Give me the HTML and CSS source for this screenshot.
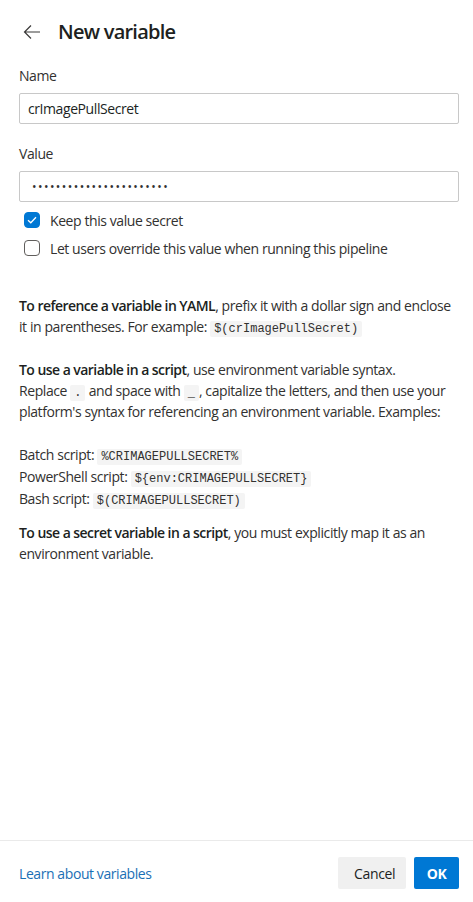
FILE: index.html
```html
<!DOCTYPE html>
<html lang="en">
<head>
<meta charset="utf-8">
<title>New variable</title>
<link rel="stylesheet" href="styles.css">
</head>
<body>
<div class="panel">
  <div class="content">
    <header class="header">
      <button class="back" aria-label="Back">
        <svg width="18" height="16" viewBox="0 0 18 16"><path d="M17 8H1.5M8 1.5L1.5 8L8 14.5" fill="none" stroke="#3b3a39" stroke-width="1.2"/></svg>
      </button>
      <h1 class="title">New variable</h1>
    </header>

    <div class="field">
      <label class="label">Name</label>
      <div class="input">crImagePullSecret</div>
    </div>

    <div class="field">
      <label class="label">Value</label>
      <div class="input secret">•••••••••••••••••••••••</div>
    </div>

    <div class="checks">
      <div class="check">
        <span class="box checked"><svg width="10" height="8" viewBox="0 0 10 8"><path d="M1 4.2L3.8 6.8L9 1.3" fill="none" stroke="#fff" stroke-width="1.3"/></svg></span>
        <span>Keep this value secret</span>
      </div>
      <div class="check">
        <span class="box"></span>
        <span>Let users override this value when running this pipeline</span>
      </div>
    </div>

    <div class="help">
      <p><b>To reference a variable in YAML</b>, prefix it with a dollar sign and enclose it in parentheses. For example: <code>$(crImagePullSecret)</code></p>
      <p><b>To use a variable in a script</b>, use environment variable syntax.<br>Replace <code>.</code> and space with <code>_</code>, capitalize the letters, and then use your platform's syntax for referencing an environment variable. Examples:</p>
      <p class="examples">Batch script: <code>%CRIMAGEPULLSECRET%</code><br>PowerShell script: <code>${env:CRIMAGEPULLSECRET}</code><br>Bash script: <code>$(CRIMAGEPULLSECRET)</code></p>
      <p><b>To use a secret variable in a script</b>, you must explicitly map it as an environment variable.</p>
    </div>
  </div>

  <footer class="footer">
    <a class="link" href="#">Learn about variables</a>
    <div class="buttons">
      <button class="btn cancel">Cancel</button>
      <button class="btn ok">OK</button>
    </div>
  </footer>
</div>
</body>
</html>
```

FILE: styles.css
```css
* { box-sizing: border-box; }
html, body { margin: 0; padding: 0; }
body {
  width: 473px;
  height: 902px;
  background: #fff;
  font-family: "Open Sans", "Noto Sans", sans-serif;
  font-size: 14px;
  letter-spacing: -0.42px;
  color: #201f1e;
}
.panel {
  height: 902px;
  display: flex;
  flex-direction: column;
}
.content {
  flex: 1;
  padding: 18px 14px 0 19px;
}
.header {
  display: flex;
  align-items: center;
  height: 28px;
  gap: 17px;
}
.back {
  border: 0;
  background: none;
  padding: 0;
  margin-left: 4px;
  width: 18px;
  height: 16px;
  display: flex;
}
.title {
  margin: 0;
  font-size: 20px;
  font-weight: 600;
  letter-spacing: -0.75px;
  line-height: 28px;
  color: #201f1e;
}
.field { margin-top: 20px; }
.label {
  display: block;
  line-height: 20px;
  margin-top: 1px;
  margin-bottom: 7px;
  color: #323130;
}
.input {
  height: 31px;
  border: 1px solid #c8c8c8;
  border-radius: 2px;
  padding: 0 8px;
  display: flex;
  align-items: center;
  color: #201f1e;
}
.secret {
  font-size: 12px;
  letter-spacing: 1.45px;
  padding-left: 12px;
  color: #323130;
}
.checks {
  margin-top: 8px;
  display: flex;
  flex-direction: column;
  gap: 8px;
}
.check {
  display: flex;
  align-items: center;
  height: 20px;
  gap: 10px;
  padding-left: 5px;
  color: #323130;
}
.box {
  width: 16px;
  height: 16px;
  border: 1px solid #605e5c;
  border-radius: 4px;
  display: flex;
  align-items: center;
  justify-content: center;
}
.box.checked {
  background: #0078d4;
  border-color: #0078d4;
}
.help {
  margin-top: 37px;
  line-height: 21px;
  color: #323130;
}
.help p { margin: 0 0 22px; }
.help p.examples { line-height: 22px; margin: 22px 0 12px; }
.help b { font-weight: 600; color: #201f1e; letter-spacing: -0.55px; }
code {
  font-family: "Liberation Mono", "DejaVu Sans Mono", monospace;
  font-size: 12px;
  line-height: 14px;
  letter-spacing: 0;
  background: #f4f4f4;
  padding: 1px 4px;
  border-radius: 2px;
  color: #323130;
}
.footer {
  border-top: 1px solid #eaeaea;
  padding: 16px 14px 13px 19px;
  display: flex;
  align-items: center;
  justify-content: space-between;
}
.link {
  color: #1a6fb5;
  text-decoration: none;
}
.buttons { display: flex; gap: 8px; }
.btn {
  height: 32px;
  border: 0;
  border-radius: 2px;
  font-family: inherit;
  font-size: 14px;
  letter-spacing: -0.35px;
  padding: 0 16px;
}
.cancel { background: #f0f0f0; color: #201f1e; width: 68px; }
.ok { background: #0078d4; color: #fff; font-weight: 700; width: 45px; padding: 0; }
```
